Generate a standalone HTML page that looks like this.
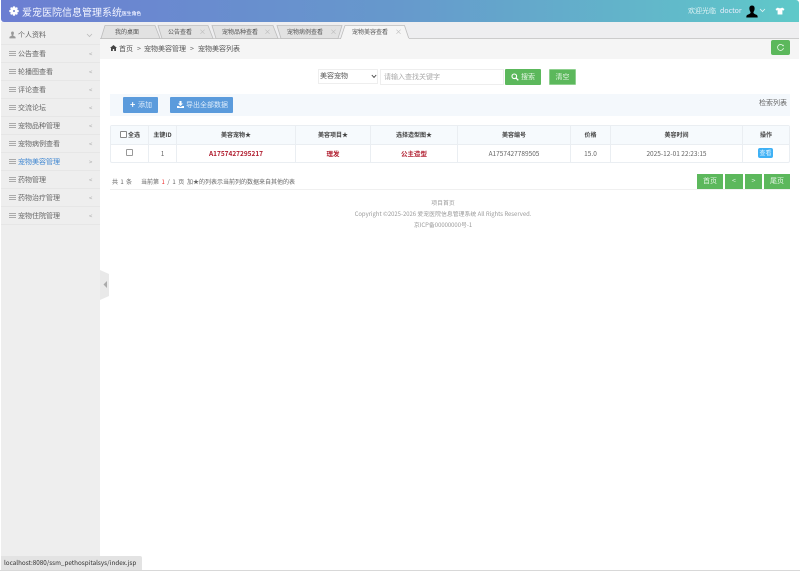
<!DOCTYPE html>
<html lang="zh"><head><meta charset="utf-8"><title>爱宠医院信息管理系统</title>
<style>
html,body{margin:0;padding:0;background:#fff;}
body{width:800px;height:571px;position:relative;overflow:hidden;font-family:"Noto Sans CJK SC","Liberation Sans",sans-serif;font-size:7px;color:#666;}
.a{position:absolute;white-space:nowrap;}
.hdr{position:absolute;left:1px;top:0;width:798px;height:22px;background:linear-gradient(90deg,#6c7ed2 0%,#6699cc 50%,#5fc9c9 100%);border-bottom-left-radius:3px;border-top-right-radius:3px;}
.side{position:absolute;left:1px;top:22px;width:99px;height:549px;background:#eeeeee;}
.mi{position:absolute;left:1px;width:99px;height:18px;border-bottom:1px solid #e6e6e6;box-sizing:border-box;}
.mi .b{position:absolute;left:8px;top:6px;width:7px;height:5px;border-top:1px solid #aaa;border-bottom:1px solid #aaa;box-sizing:border-box;}
.mi .b:after{content:"";position:absolute;left:0;right:0;top:1px;height:1px;background:#aaa;}
.mi .t{position:absolute;left:17px;top:3.5px;font-size:7px;line-height:11px;color:#666;white-space:nowrap;}
.mi .c{position:absolute;left:88px;top:3px;font-size:6px;line-height:11px;color:#aaa;}
.tabbar{position:absolute;left:100px;top:22px;width:699px;height:17px;background:#eeeef0;border-bottom:1px solid #ccc;box-sizing:border-box;}
.tl{position:absolute;top:27px;font-size:6px;line-height:10px;color:#555;white-space:nowrap;}
.x{position:absolute;top:27px;font-size:7px;line-height:10px;color:#bbb;}
.crumb{position:absolute;left:100px;top:39px;width:699px;height:20px;background:#f5f5f5;}
.btn{position:absolute;border-radius:1px;color:#e8f4ff;text-align:center;box-sizing:border-box;white-space:nowrap;}
.g{background:#5cb85c;color:#e4f5e4;}
.bl{background:#5b9bdc;}
.cell{position:absolute;text-align:center;white-space:nowrap;}
.th{top:126px;height:18px;line-height:17px;font-size:6px;font-weight:bold;color:#444;}
.td{top:144px;height:18px;line-height:18px;font-size:6.5px;color:#666;}
.r{color:#b01c2e;font-weight:bold;}
.vl{position:absolute;top:126px;height:36px;width:1px;background:#eaeef2;}
.pg{position:absolute;top:174px;height:15px;background:#5cb85c;color:#e4f5e4;font-size:7px;line-height:15px;text-align:center;}
.ft{position:absolute;left:100px;width:686px;text-align:center;font-size:5.9px;line-height:9px;color:#999;}
</style></head><body>

<div class="hdr"></div>
<svg class="a" style="left:9px;top:6px" width="10" height="10" viewBox="0 0 10 10"><g fill="#fff"><circle cx="5" cy="5" r="3.2"/><circle cx="5" cy="1.5" r="1.3"/><circle cx="5" cy="8.5" r="1.3"/><circle cx="1.5" cy="5" r="1.3"/><circle cx="8.5" cy="5" r="1.3"/><circle cx="2.5" cy="2.5" r="1.2"/><circle cx="7.5" cy="2.5" r="1.2"/><circle cx="2.5" cy="7.5" r="1.2"/><circle cx="7.5" cy="7.5" r="1.2"/></g><circle cx="5" cy="5" r="1" fill="#7080c8"/></svg>
<div class="a" style="left:22px;top:4.5px;font-size:10px;line-height:14px;color:#f2f4ff;">爱宠医院信息管理系统</div>
<div class="a" style="left:122px;top:10px;font-size:4.8px;line-height:7px;color:#e8ecff;font-weight:bold;">医生角色</div>
<div class="a" style="left:688px;top:6px;font-size:7px;line-height:10px;color:#dff3f5;">欢迎光临</div>
<div class="a" style="left:720px;top:6px;font-size:7px;line-height:10px;color:#eef;">doctor</div>
<svg class="a" style="left:745px;top:5px" width="14" height="13" viewBox="0 0 14 13"><path d="M7 0.5C5 0.5 4.2 2 4.4 4C4.5 5.5 5.2 6.5 5.6 7.2C5.7 8.3 4.5 9 2.6 9.8C1.6 10.2 1.3 11 1.3 12.5H12.7C12.7 11 12.4 10.2 11.4 9.8C9.5 9 8.3 8.3 8.4 7.2C8.8 6.5 9.5 5.5 9.6 4C9.8 2 9 0.5 7 0.5Z" fill="#000"/></svg>
<svg class="a" style="left:759px;top:8px" width="7" height="5" viewBox="0 0 7 5"><path d="M1 1L3.5 3.5L6 1" stroke="#e6f6f6" stroke-width="0.8" fill="none"/></svg>
<svg class="a" style="left:775px;top:7px" width="10" height="8" viewBox="0 0 10 8"><path d="M3 0.5L0.5 2L1.5 3.6L2.6 3.1V7.5H7.4V3.1L8.5 3.6L9.5 2L7 0.5C6.5 1.5 3.5 1.5 3 0.5Z" fill="#fff"/></svg>

<div class="side"></div>
<svg class="a" style="left:9px;top:31px" width="7" height="8" viewBox="0 0 7 8"><path d="M3.5 0.5C2.4 0.5 2 1.3 2.1 2.4C2.2 3.2 2.6 3.8 2.8 4.2C2.8 4.9 1 5.3 0.6 5.8C0.4 6.2 0.4 6.8 0.4 7.4H6.6C6.6 6.8 6.6 6.2 6.4 5.8C6 5.3 4.2 4.9 4.2 4.2C4.4 3.8 4.8 3.2 4.9 2.4C5 1.3 4.6 0.5 3.5 0.5Z" fill="#999"/></svg>
<div class="a" style="left:18px;top:30px;font-size:7px;line-height:11px;color:#666;">个人资料</div>
<svg class="a" style="left:86px;top:33px" width="7" height="5" viewBox="0 0 7 5"><path d="M1 1L3.5 3.5L6 1" stroke="#bbb" stroke-width="0.8" fill="none"/></svg>
<div class="mi" style="top:26px;height:19px;"></div>
<div class="mi" style="top:45px"><span class="b"></span><span class="t">公告查看</span><span class="c">&lt;</span></div>
<div class="mi" style="top:63px"><span class="b"></span><span class="t">轮播图查看</span><span class="c">&lt;</span></div>
<div class="mi" style="top:81px"><span class="b"></span><span class="t">评论查看</span><span class="c">&lt;</span></div>
<div class="mi" style="top:99px"><span class="b"></span><span class="t">交流论坛</span><span class="c">&lt;</span></div>
<div class="mi" style="top:117px"><span class="b"></span><span class="t">宠物品种管理</span><span class="c">&lt;</span></div>
<div class="mi" style="top:135px"><span class="b"></span><span class="t">宠物病例查看</span><span class="c">&lt;</span></div>
<div class="mi" style="top:153px"><span class="b"></span><span class="t" style="color:#3d85d0">宠物美容管理</span><span class="c">&gt;</span></div>
<div class="mi" style="top:171px"><span class="b"></span><span class="t">药物管理</span><span class="c">&lt;</span></div>
<div class="mi" style="top:189px"><span class="b"></span><span class="t">药物治疗管理</span><span class="c">&lt;</span></div>
<div class="mi" style="top:207px"><span class="b"></span><span class="t">宠物住院管理</span><span class="c">&lt;</span></div>

<svg class="a" style="left:100px;top:270px" width="10" height="30" viewBox="0 0 10 30"><path d="M0 0L9 4V26L0 30Z" fill="#e9e9e9"/><path d="M7 11L3.5 14.5L7 18Z" fill="#aaa"/></svg>

<div class="tabbar"></div>
<svg class="a" style="left:0;top:0" width="420" height="40" viewBox="0 0 420 40">
<g fill="#e2e2e2" stroke="#bdbdbd" stroke-width="0.8">
<path d="M281 38.5L277 25.5H342L338 38.5Z"/>
<path d="M216 38.5L212 25.5H273L278 38.5Z"/>
<path d="M162 38.5L158 25.5H208L213 38.5Z"/>
<path d="M101 38.5L105 25.5H155L160 38.5Z"/>
</g>
<path d="M340.5 39L345 25.5H404.5L409 39Z" fill="#f5f5f5" stroke="#bdbdbd" stroke-width="0.8"/>
<path d="M341 39H409" stroke="#f5f5f5" stroke-width="1.5"/>
</svg>
<div class="tl" style="left:115px">我的桌面</div>
<div class="tl" style="left:168px">公告查看</div><div class="x" style="left:199px">×</div>
<div class="tl" style="left:222px">宠物品种查看</div><div class="x" style="left:264px">×</div>
<div class="tl" style="left:287px">宠物病例查看</div><div class="x" style="left:330px">×</div>
<div class="tl" style="left:352px">宠物美容查看</div><div class="x" style="left:395px">×</div>

<div class="crumb"></div>
<svg class="a" style="left:110px;top:45px" width="7" height="6" viewBox="0 0 7 6"><path d="M3.5 0L0 3H1V6H2.8V4H4.2V6H6V3H7Z" fill="#444"/></svg>
<div class="a" style="left:119px;top:43.5px;font-size:7px;line-height:11px;color:#555;">首页</div>
<div class="a" style="left:137px;top:43.5px;font-size:7px;line-height:11px;color:#555;">&gt;</div>
<div class="a" style="left:144px;top:43.5px;font-size:7px;line-height:11px;color:#555;">宠物美容管理</div>
<div class="a" style="left:190px;top:43.5px;font-size:7px;line-height:11px;color:#555;">&gt;</div>
<div class="a" style="left:198px;top:43.5px;font-size:7px;line-height:11px;color:#555;">宠物美容列表</div>
<div class="btn g" style="left:771px;top:40px;width:19px;height:15px;border-radius:2px;"></div>
<svg class="a" style="left:776px;top:43px" width="9" height="9" viewBox="0 0 9 9"><path d="M7.2 3A3 3 0 1 0 7.5 5" stroke="#e4f5e4" stroke-width="0.8" fill="none"/><path d="M6 2.8L7.7 3.4L7.8 1.6Z" fill="#e4f5e4"/></svg>

<div class="a" style="left:318px;top:69px;width:60px;height:15px;border:1px solid #eee;box-sizing:border-box;background:#fff;"></div>
<div class="a" style="left:320px;top:71px;font-size:7px;line-height:11px;color:#555;">美容宠物</div>
<svg class="a" style="left:371px;top:74px" width="6" height="5" viewBox="0 0 6 5"><path d="M0.8 1L3 3.4L5.2 1" stroke="#444" stroke-width="0.9" fill="none"/></svg>
<div class="a" style="left:380px;top:69px;width:124px;height:16px;border:1px solid #eee;box-sizing:border-box;background:#fff;"></div>
<div class="a" style="left:384px;top:72px;font-size:7px;line-height:11px;color:#aaa;">请输入查找关键字</div>
<div class="btn g" style="left:505px;top:69px;width:36px;height:16px;"></div>
<svg class="a" style="left:511px;top:73px" width="8" height="8" viewBox="0 0 8 8"><circle cx="3.3" cy="3.3" r="2.3" stroke="#fff" stroke-width="1.1" fill="none"/><path d="M5 5L7.3 7.3" stroke="#fff" stroke-width="1.3"/></svg>
<div class="a" style="left:521px;top:72px;font-size:7px;line-height:11px;color:#e4f5e4;">搜索</div>
<div class="btn g" style="left:549px;top:69px;width:27px;height:16px;font-size:7px;line-height:14px;border:1px solid #8fd08f;">清空</div>

<div class="a" style="left:110px;top:94px;width:680px;height:22px;background:#f4f8fc;"></div>
<div class="btn bl" style="left:123px;top:97px;width:35px;height:16px;"></div>
<div class="a" style="left:130px;top:100px;font-size:9px;line-height:10px;color:#fff;font-weight:bold;">+</div>
<div class="a" style="left:138px;top:100px;font-size:7px;line-height:11px;color:#dcebfa;">添加</div>
<div class="btn bl" style="left:170px;top:97px;width:63px;height:16px;"></div>
<svg class="a" style="left:177px;top:101px" width="7" height="7" viewBox="0 0 7 7"><path d="M2.5 0H4.5V2.5H6L3.5 5L1 2.5H2.5ZM0 5H1.5L3.5 6L5.5 5H7V7H0Z" fill="#fff"/></svg>
<div class="a" style="left:186px;top:100px;font-size:7px;line-height:11px;color:#dcebfa;">导出全部数据</div>
<div class="a" style="left:759px;top:98px;font-size:7px;line-height:11px;color:#666;">检索列表</div>

<div class="a" style="left:110px;top:125px;width:680px;height:38px;border:1px solid #eaeef2;border-radius:2px;box-sizing:border-box;"></div>
<div class="a" style="left:111px;top:126px;width:678px;height:18px;background:#f6fafd;border-bottom:1px solid #eaeef2;"></div>
<div class="vl" style="left:148px"></div>
<div class="vl" style="left:176px"></div>
<div class="vl" style="left:295px"></div>
<div class="vl" style="left:370px"></div>
<div class="vl" style="left:457px"></div>
<div class="vl" style="left:570px"></div>
<div class="vl" style="left:610px"></div>
<div class="vl" style="left:742px"></div>

<div class="a" style="left:120px;top:131px;width:5px;height:5px;border:1px solid #888;border-radius:1px;background:#fff;"></div>
<div class="cell th" style="left:127px;width:14px;">全选</div>
<div class="cell th" style="left:149px;width:27px;">主键ID</div>
<div class="cell th" style="left:177px;width:118px;">美容宠物★</div>
<div class="cell th" style="left:296px;width:74px;">美容项目★</div>
<div class="cell th" style="left:371px;width:86px;">选择造型图★</div>
<div class="cell th" style="left:458px;width:112px;">美容编号</div>
<div class="cell th" style="left:571px;width:39px;">价格</div>
<div class="cell th" style="left:611px;width:131px;">美容时间</div>
<div class="cell th" style="left:743px;width:46px;">操作</div>

<div class="a" style="left:126px;top:149px;width:5px;height:5px;border:1px solid #999;border-radius:1px;background:#fff;"></div>
<div class="cell td" style="left:149px;width:27px;">1</div>
<div class="cell td r" style="left:177px;width:118px;">A1757427295217</div>
<div class="cell td r" style="left:296px;width:74px;">理发</div>
<div class="cell td r" style="left:371px;width:86px;">公主造型</div>
<div class="cell td" style="left:458px;width:112px;">A1757427789505</div>
<div class="cell td" style="left:571px;width:39px;">15.0</div>
<div class="cell td" style="left:611px;width:131px;">2025-12-01 22:23:15</div>
<div class="btn" style="left:758px;top:148px;width:15px;height:10px;background:#3fb1f5;color:#e8f6ff;font-size:6px;line-height:10px;border-radius:2px;">查看</div>

<div class="a" style="left:112px;top:177px;font-size:6px;line-height:10px;color:#666;word-spacing:1px;">共 1 条</div>
<div class="a" style="left:141px;top:177px;font-size:6px;line-height:10px;color:#666;word-spacing:1.2px;">当前第 <span style="color:#e33">1</span> / 1 页</div>
<div class="a" style="left:187px;top:177px;font-size:6px;line-height:10px;color:#666;">加★的列表示当前列的数据来自其他的表</div>
<div class="pg" style="left:697px;width:26px">首页</div>
<div class="pg" style="left:725px;width:18px">&lt;</div>
<div class="pg" style="left:745px;width:17px">&gt;</div>
<div class="pg" style="left:764px;width:26px">尾页</div>
<div class="a" style="left:110px;top:189px;width:680px;height:1px;background:#f0f0f0;"></div>

<div class="ft" style="top:198px">项目首页</div>
<div class="ft" style="top:209px">Copyright ©2025-2026 爱宠医院信息管理系统 All Rights Reserved.</div>
<div class="ft" style="top:220px">京ICP备00000000号-1</div>

<div class="a" style="left:1px;top:556px;width:141px;height:14px;background:#e3e3e3;border-radius:0 2px 0 0;font-size:6.3px;line-height:14px;color:#333;text-indent:3px;overflow:hidden;">localhost:8080/ssm_pethospitalsys/index.jsp</div>
<div class="a" style="left:0;top:570px;width:800px;height:1px;background:#d8d8d8;"></div>
</body></html>
